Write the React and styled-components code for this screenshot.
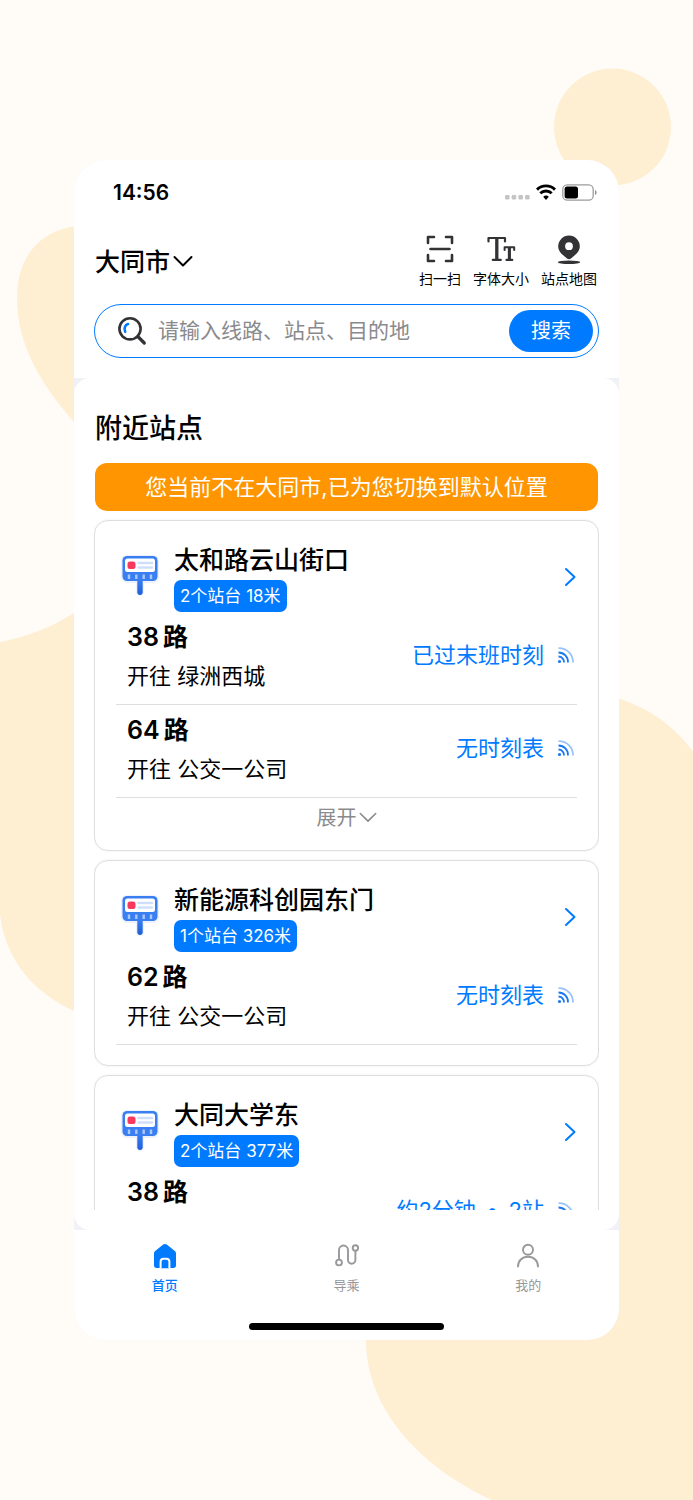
import { useId } from 'react'
import styled, { createGlobalStyle } from 'styled-components'

const BLUE = '#007aff'
const INK = '#333336'
const GREY = '#98989c'
const LINE = '#dedee0'
const SAND = '#feefd3'

const GlobalStyle = createGlobalStyle`
  * {
    box-sizing: border-box;
  }
  body {
    margin: 0;
    background: #fffcf8;
    color: #000;
    font-family: Inter, 'Noto Sans CJK SC', sans-serif;
  }
  button, input {
    font-family: inherit;
  }
  button {
    border: 0;
    padding: 0;
    background: none;
    color: inherit;
    cursor: pointer;
  }
  svg {
    display: block;
    flex: none;
  }
`

const Stage = styled.div`
  position: relative;
  height: 100vh;
  min-height: 900px;
  padding: 160px 74px;
  overflow: hidden;
`

const Backdrop = styled.svg`
  position: absolute;
  inset: 0;
  width: 100%;
  height: 100%;
`

const Phone = styled.div`
  position: relative;
  display: flex;
  flex-direction: column;
  height: 100%;
  border-radius: 32px;
  background: #f1f1f8;
  overflow: hidden;
`

const Header = styled.header`
  padding: 0 20px 20px;
  background: #fff;
`

const StatusBar = styled.div`
  display: flex;
  align-items: center;
  justify-content: space-between;
  height: 64px;
  padding: 0 2px 0 19px;
  font-size: 21px;
  font-weight: 600;
`

const StatusIcons = styled.div`
  display: flex;
  align-items: center;
  gap: 6px;
`

const TopRow = styled.div`
  display: flex;
  align-items: center;
  justify-content: space-between;
  padding: 10px 2px 14px 1px;
`

const City = styled.button`
  display: flex;
  align-items: center;
  gap: 3px;
  font-size: 25px;
  font-weight: 500;
  line-height: 32px;
`

const QuickList = styled.nav`
  display: flex;
  gap: 12px;
`

const Quick = styled.button`
  display: flex;
  flex-direction: column;
  align-items: center;
  gap: 5px;
  padding-bottom: 1px;
  font-size: 14px;
  line-height: 20px;
`

const SearchBox = styled.form`
  display: flex;
  align-items: center;
  height: 54px;
  padding: 0 5px 0 22px;
  border: 1px solid ${BLUE};
  border-radius: 27px;
`

const SearchInput = styled.input`
  flex: 1;
  min-width: 0;
  padding: 0 0 0 11px;
  border: 0;
  outline: 0;
  background: none;
  font-size: 21px;
  line-height: 30px;
  &::placeholder {
    color: #8a8a8d;
    opacity: 1;
  }
`

const SearchButton = styled.button`
  width: 84px;
  height: 42px;
  border-radius: 21px;
  background: ${BLUE};
  color: #fff;
  font-size: 20px;
  line-height: 42px;
`

const Panel = styled.main`
  flex: 1;
  min-height: 0;
  padding: 24px 20px 20px;
  border-radius: 16px;
  background: #fff;
`

const Scroller = styled.div`
  display: flex;
  flex-direction: column;
  gap: 9px;
  height: 100%;
  overflow: hidden;
`

const Heading = styled.h1`
  flex: none;
  margin: 0 1px;
  padding-top: 2px;
  font-size: 27px;
  font-weight: 500;
  line-height: 50px;
`

const Notice = styled.p`
  flex: none;
  margin: 0 1px;
  border-radius: 12px;
  background: #ff9500;
  color: #fff;
  font-size: 22px;
  line-height: 48px;
  text-align: center;
  white-space: nowrap;
`

const Card = styled.section`
  flex: none;
  padding: 20px 21px;
  border: 1px solid ${LINE};
  border-radius: 14px;
  box-shadow: 0 0 2px rgba(0, 0, 0, .1);
`

const CardHead = styled.div`
  display: flex;
  align-items: center;
  padding-left: 4px;
`

const StationText = styled.div`
  flex: 1;
  display: flex;
  flex-direction: column;
  align-items: flex-start;
  gap: 1px;
  margin-left: 14px;
`

const StationName = styled.h2`
  margin: 0;
  font-size: 25px;
  font-weight: 500;
  line-height: 38px;
`

const Badge = styled.span`
  padding: 0 6px;
  border-radius: 7px;
  background: ${BLUE};
  color: #fff;
  font-size: 17px;
  line-height: 32px;
`

const More = styled.button`
  color: ${BLUE};
`

const Route = styled.div`
  display: flex;
  align-items: center;
  justify-content: space-between;
  padding: 6px 2px 8px 11px;
  border-bottom: 1px solid ${LINE};
`

const RouteName = styled.h3`
  display: flex;
  gap: 4px;
  margin: 0;
  font-size: 25px;
  font-weight: 600;
  line-height: 38px;
`

const Direction = styled.p`
  margin: 0;
  font-size: 22px;
  line-height: 40px;
`

const Arrival = styled.span`
  display: flex;
  align-items: center;
  gap: 13px;
  padding-bottom: 9px;
  color: ${BLUE};
  font-size: 22px;
  svg {
    margin-top: 4px;
  }
`

const Dot = styled.span`
  margin: 0 4px;
`

const Expand = styled.button`
  display: flex;
  align-items: center;
  gap: 2px;
  margin: 0 auto;
  padding-top: 8px;
  color: #8a8a8d;
  font-size: 20px;
  line-height: 24px;
`

const Footer = styled.footer`
  display: flex;
  flex-direction: column;
  align-items: center;
  height: 110px;
  padding: 13px 0 10px;
  background: #fff;
`

const Tabs = styled.nav`
  display: flex;
  width: 100%;
`

const Tab = styled.a`
  flex: 1;
  display: flex;
  flex-direction: column;
  align-items: center;
  gap: 6px;
  color: ${props => props.$active ? BLUE : GREY};
  font-size: 13px;
  font-weight: ${props => props.$active ? 500 : 400};
  line-height: 20px;
  text-decoration: none;
`

const HomeBar = styled.div`
  width: 195px;
  height: 7px;
  margin-top: auto;
  border-radius: 4px;
  background: #000;
`

const Down = ({ size, stroke = 2 }) => (
  <svg width={size} height={size} viewBox="0 0 20 20" fill="none" stroke="currentColor" strokeWidth={stroke} strokeLinecap="round" strokeLinejoin="round">
    <path d="M1.500 5l8.500 8.500L18.500 5" />
  </svg>
)

const CellDots = () => (
  <svg width="25" height="16" viewBox="0 0 25 16" fill="#c4c4c6">
    {[0, 6.7, 13.4, 20.1].map(x => <rect key={x} x={x} y="11" width="4.500" height="4.500" rx="1.200" />)}
  </svg>
)

const Wifi = () => (
  <svg width="20" height="16" viewBox="0 0 20 16" fill="none" stroke="#000" strokeWidth="2.900">
    <path d="M1 5.600a12.800 12.800 0 0 1 18 0" />
    <path d="M4.300 9.300a8.100 8.100 0 0 1 11.400 0" />
    <path d="M10 15.900L7.200 12.700a4.300 4.300 0 0 1 5.600 0z" fill="#000" stroke="none" />
  </svg>
)

const Battery = () => (
  <svg width="35" height="17" viewBox="0 0 35 17">
    <rect x=".8" y=".8" width="30.400" height="15.400" rx="4.500" fill="none" stroke="#9c9c9e" strokeWidth="1.300" />
    <rect x="2.600" y="2.600" width="13.400" height="11.800" rx="2.500" />
    <path d="M33 6c2 .8 2 4.200 0 5z" fill="#8c8c8e" />
  </svg>
)

const ScanIcon = () => (
  <svg width="30" height="30" viewBox="0 0 30 30" fill="none" stroke={INK} strokeWidth="2.600" strokeLinejoin="round">
    <path d="M3 9V3h6M21 3h6v6M27 21v6h-6M9 27H3v-6" strokeLinecap="round" />
    <path d="M5.500 15h19" strokeLinecap="round" strokeWidth="2.600" />
  </svg>
)

const TextSizeIcon = () => (
  <svg width="30" height="30" viewBox="0 0 30 30" fill="none" stroke={INK} strokeLinecap="round" strokeLinejoin="round">
    <path d="M2.500 7.500V4h16.500v3.500" strokeWidth="2.200" />
    <path d="M10.800 4v21.500" strokeWidth="3.300" strokeLinecap="butt" />
    <path d="M6.800 25.900h8" strokeWidth="2.200" />
    <path d="M18.600 16v-2.800h9.600V16" strokeWidth="2" />
    <path d="M23.400 13v12.500" strokeWidth="3.100" strokeLinecap="butt" />
    <path d="M20.500 25.900h5.800" strokeWidth="2.200" />
  </svg>
)

const PinIcon = () => (
  <svg width="30" height="30" viewBox="0 0 30 30" fill={INK}>
    <path fillRule="evenodd" d="M15 1.500a10.800 10.800 0 0 0-10.800 10.800c0 5.800 4.700 8.500 8.800 12.200 1.200 1.100 2.800 1.100 4 0 4.100-3.700 8.800-6.400 8.800-12.200A10.800 10.800 0 0 0 15 1.500zm0 6.800a3.900 3.900 0 1 1 0 7.800 3.900 3.900 0 0 1 0-7.800z" />
    <ellipse cx="15" cy="28.200" rx="11.200" ry="1.700" />
  </svg>
)

const SearchIcon = () => (
  <svg width="30" height="30" viewBox="0 0 30 30" fill="none" strokeLinecap="round">
    <circle cx="13" cy="12.800" r="10.600" stroke={INK} strokeWidth="2.600" />
    <path d="M20.800 20.500l6.500 6.500" stroke={INK} strokeWidth="3.200" />
    <path d="M11 8c-3 .9-4.300 4.400-2.800 7.800" stroke={BLUE} strokeWidth="2.600" />
  </svg>
)

function StationIcon() {
  const id = useId()
  return (
    <svg width="40" height="48" viewBox="0 0 40 48">
      <defs>
        <linearGradient id={id} x1="0" y1="0" x2="0" y2="1">
          <stop offset="0" stopColor="#3a82f7" />
          <stop offset="1" stopColor="#1f5fd6" />
        </linearGradient>
      </defs>
      <rect x="1" y="2" width="38" height="28" rx="6" fill="#edf1f9" />
      <rect x="16" y="27" width="8" height="16" rx="4" fill="#edf1f9" />
      <rect x="17.300" y="25" width="5.400" height="17" rx="2.400" fill={`url(#${id})`} />
      <rect x="2.500" y="3" width="35" height="25" rx="4.500" fill="#3a7ff2" />
      <rect x="5" y="5.500" width="30" height="13.500" rx="2.500" fill="#fff" />
      <rect x="7.500" y="8.500" width="8" height="7.500" rx="2.500" fill="#f8385c" />
      <path d="M18.500 10h13.500M18.500 14.500h13.500" stroke="#cfdffb" strokeWidth="2.400" strokeLinecap="round" />
      <path d="M9 21.500v4.500M16.300 21.500v4.500M23.700 21.500v4.500M31 21.500v4.500" stroke="#a9c8fb" strokeWidth="2.400" />
    </svg>
  )
}

const RightIcon = () => (
  <svg width="13" height="22" viewBox="0 0 13 22" fill="none" stroke="currentColor" strokeWidth="2" strokeLinecap="round" strokeLinejoin="round">
    <path d="M2 3l8.500 8L2 19" />
  </svg>
)

const SignalIcon = () => (
  <svg width="18" height="18" viewBox="0 0 18 18" fill="none" stroke="#1a78f0" strokeWidth="1.800">
    <circle cx="2.500" cy="15.500" r="1.600" fill="#1a78f0" stroke="none" />
    <path d="M1.500 10.500a5.500 5.500 0 0 1 5.500 6" />
    <path d="M1.500 6.500a9.500 9.500 0 0 1 9.500 10" />
    <path d="M1.500 2.200a14 14 0 0 1 14.500 14.300" opacity=".45" />
  </svg>
)

const HomeIcon = () => (
  <svg width="26" height="26" viewBox="0 0 26 26">
    <path d="M11.200 1.600a3 3 0 0 1 3.600 0l7.700 6.200c1 .8 1.500 1.600 1.500 2.900v11.600c0 1.700-.9 2.700-2.700 2.700H4.700C2.900 25 2 24 2 22.300V10.700c0-1.300.5-2.100 1.500-2.900z" fill={BLUE} />
    <path d="M8.600 25.200v-6.500c0-2 1-3 3-3h2.800c2 0 3 1 3 3v6.500" fill={BLUE} stroke="#fff" strokeWidth="2" />
  </svg>
)

const RouteIcon = () => (
  <svg width="26" height="26" viewBox="0 0 26 26" fill="none" stroke={GREY} strokeWidth="1.900">
    <circle cx="5" cy="19.500" r="2.900" />
    <path d="M5 16.500V7a4.500 4.500 0 0 1 9 0v10a3.700 3.700 0 0 0 7.400 0V8" />
    <circle cx="21.400" cy="5" r="2.700" />
  </svg>
)

const MeIcon = () => (
  <svg width="26" height="26" viewBox="0 0 26 26" fill="none" stroke={GREY} strokeWidth="1.900" strokeLinecap="round">
    <circle cx="13" cy="6.800" r="5" />
    <path d="M3 23.500c0-5.800 4.200-9.700 10-9.700s10 3.900 10 9.700" />
  </svg>
)

const stations = [
  {
    name: '太和路云山街口',
    info: '2个站台 18米',
    expandable: true,
    routes: [
      { no: '38', to: '绿洲西城', status: '已过末班时刻' },
      { no: '64', to: '公交一公司', status: '无时刻表' },
    ],
  },
  {
    name: '新能源科创园东门',
    info: '1个站台 326米',
    routes: [{ no: '62', to: '公交一公司', status: '无时刻表' }],
  },
  {
    name: '大同大学东',
    info: '2个站台 377米',
    routes: [{ no: '38', to: '绿洲西城', status: <span>约2分钟 <Dot>•</Dot> 2站</span> }],
  },
]

function StationCard({ station }) {
  return (
    <Card>
      <CardHead>
        <StationIcon />
        <StationText>
          <StationName>{station.name}</StationName>
          <Badge>{station.info}</Badge>
        </StationText>
        <More aria-label={station.name}><RightIcon /></More>
      </CardHead>
      {station.routes.map(route => (
        <Route key={route.no}>
          <div>
            <RouteName><span>{route.no}</span><span>路</span></RouteName>
            <Direction>开往 {route.to}</Direction>
          </div>
          <Arrival>{route.status}<SignalIcon /></Arrival>
        </Route>
      ))}
      {station.expandable && <Expand>展开<Down size={18} stroke={1.8} /></Expand>}
    </Card>
  )
}

export default function App() {
  return (
    <>
      <GlobalStyle />
      <Stage>
        <Backdrop viewBox="0 0 693 1500" preserveAspectRatio="xMidYMid slice" fill={SAND} aria-hidden="true">
          <circle cx="612.500" cy="127" r="58.500" />
          <path d="M90 225C45 225 17 252 17 298c0 48 25 88 57 124l40 30V225z" />
          <path d="M0 642c26-5 50-14 74-29l60-30v450l-60-22C35 993 6 962 0 915z" />
          <path d="M560 690c60 0 103 22 133 61v749H492c-62-28-126-84-126-160v-40h200z" />
        </Backdrop>
        <Phone>
          <Header>
            <StatusBar>
              <span>14:56</span>
              <StatusIcons><CellDots /><Wifi /><Battery /></StatusIcons>
            </StatusBar>
            <TopRow>
              <City>大同市<Down size={20} /></City>
              <QuickList>
                <Quick><ScanIcon />扫一扫</Quick>
                <Quick><TextSizeIcon />字体大小</Quick>
                <Quick><PinIcon />站点地图</Quick>
              </QuickList>
            </TopRow>
            <SearchBox onSubmit={e => e.preventDefault()}>
              <SearchIcon />
              <SearchInput aria-label="搜索" placeholder="请输入线路、站点、目的地" />
              <SearchButton>搜索</SearchButton>
            </SearchBox>
          </Header>

          <Panel>
            <Scroller>
              <Heading>附近站点</Heading>
              <Notice>您当前不在大同市,已为您切换到默认位置</Notice>
              {stations.map(station => <StationCard key={station.name} station={station} />)}
            </Scroller>
          </Panel>

          <Footer>
            <Tabs>
              <Tab href="#home" $active><HomeIcon />首页</Tab>
              <Tab href="#route"><RouteIcon />导乘</Tab>
              <Tab href="#me"><MeIcon />我的</Tab>
            </Tabs>
            <HomeBar />
          </Footer>
        </Phone>
      </Stage>
    </>
  )
}
